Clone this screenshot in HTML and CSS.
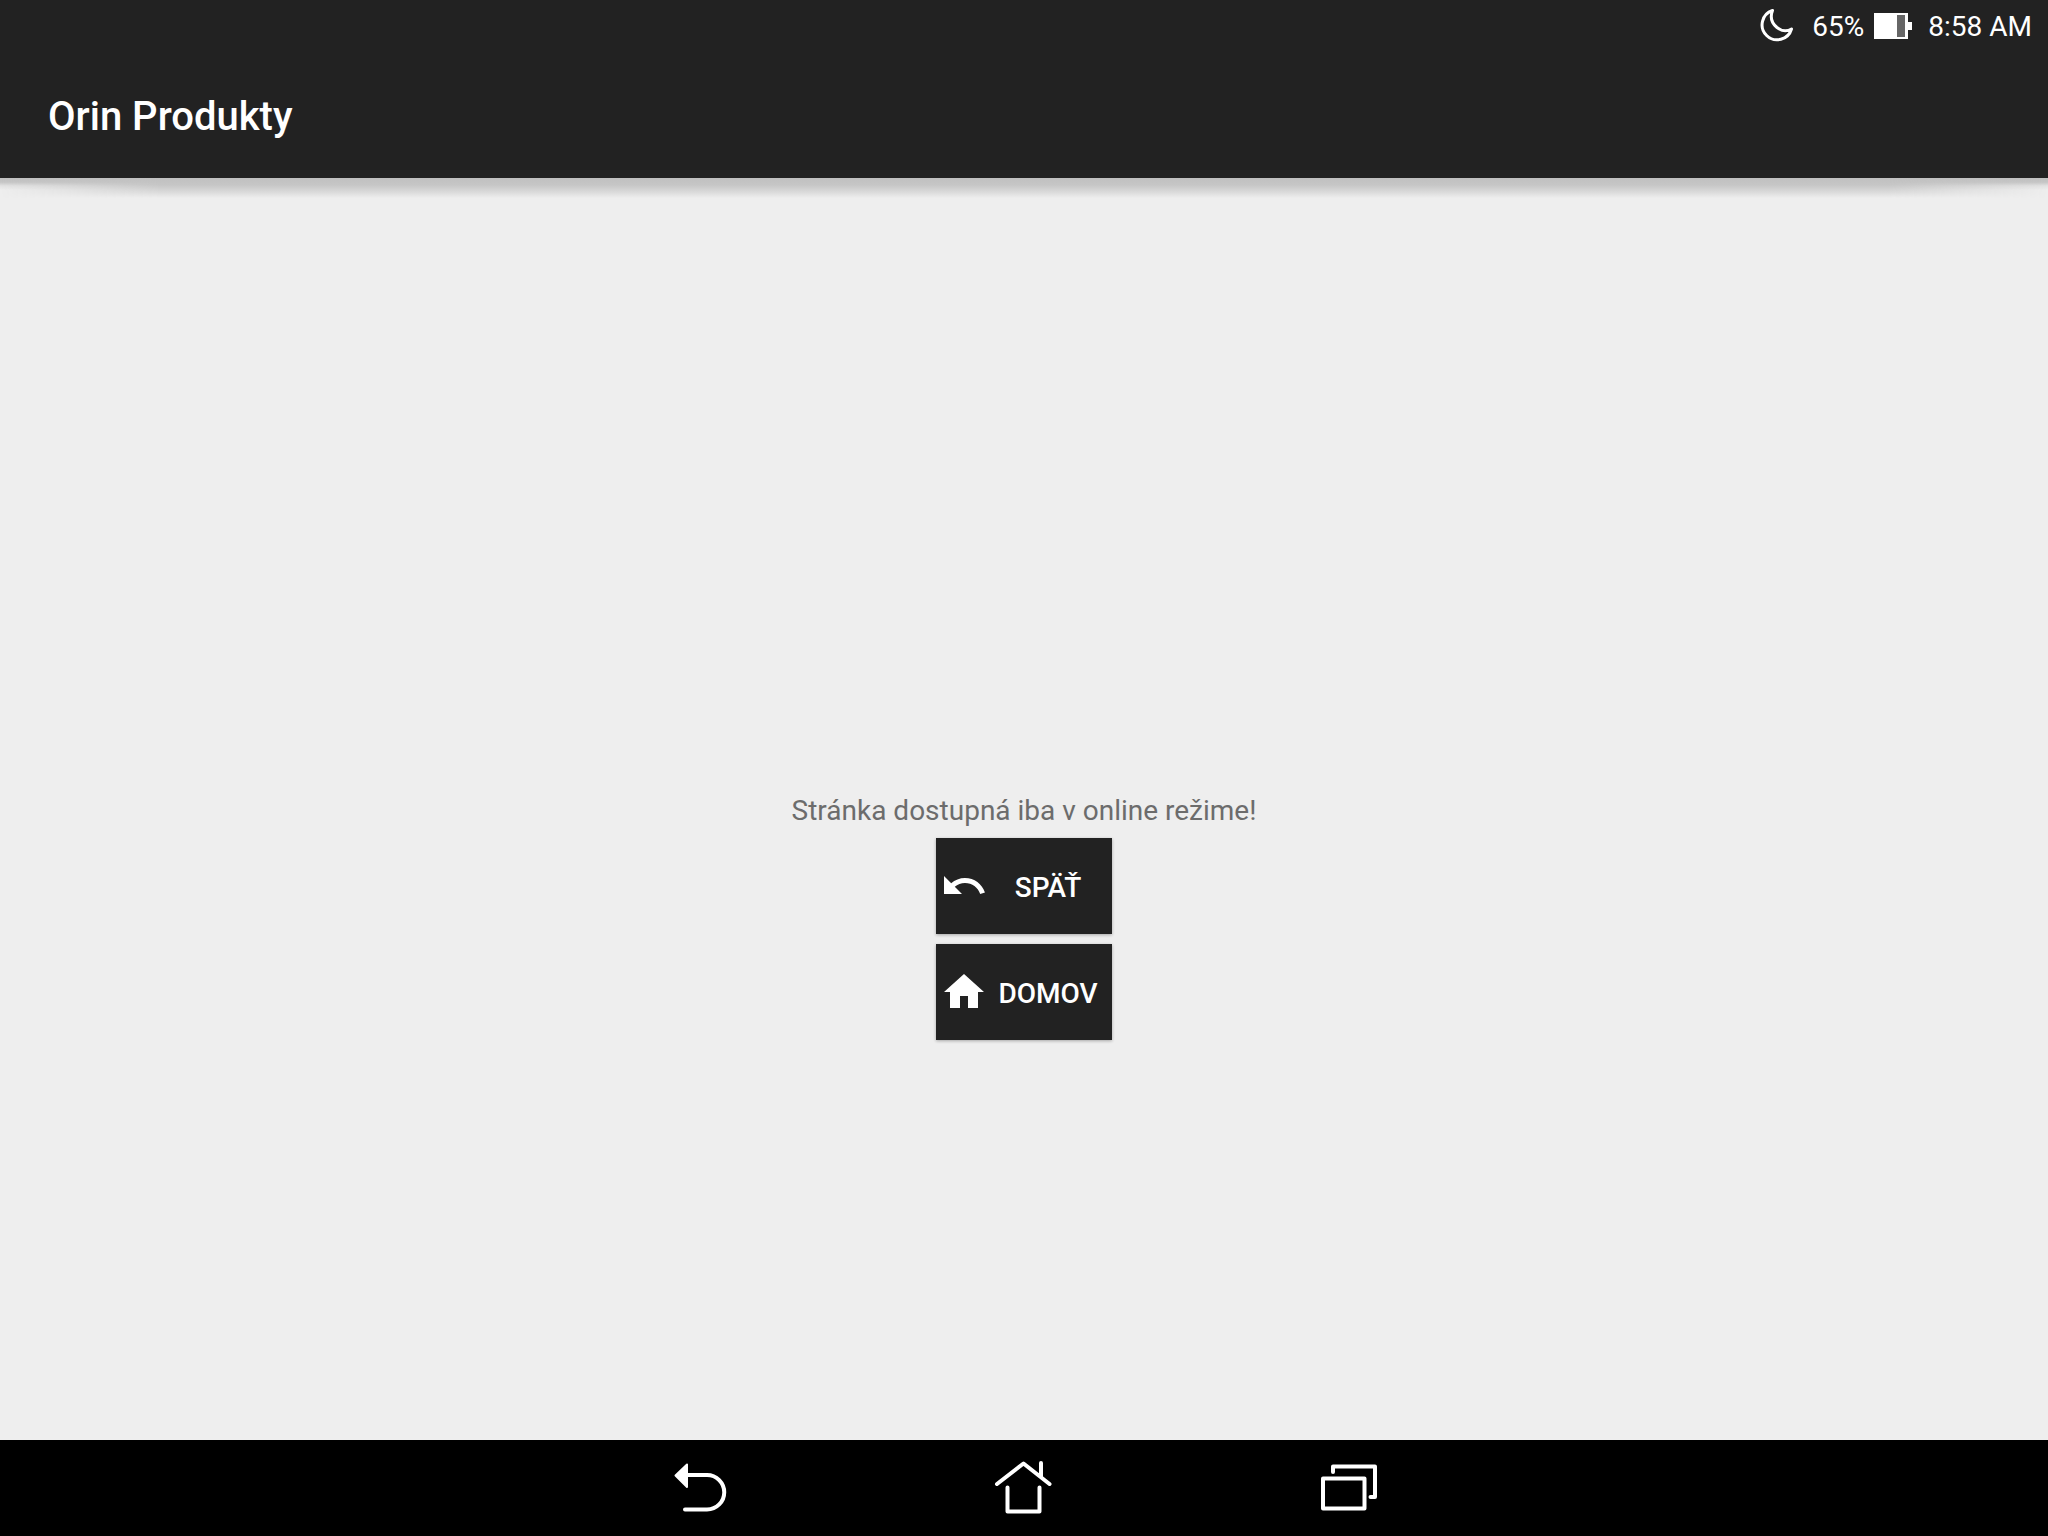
FILE: index.html
```html
<!DOCTYPE html>
<html lang="sk">
<head>
<meta charset="utf-8">
<meta name="viewport" content="width=device-width, initial-scale=1">
<title>Orin Produkty</title>
<link rel="stylesheet" href="styles.css">
</head>
<body>
<header class="top">
  <div class="status">
    <svg class="moon" viewBox="0 0 36 36" aria-hidden="true"><path d="M13.500 2.500A15 15 0 1 0 32.500 21C28 23.500 22.500 23 18 19.500C12.500 15 11 9 13.500 2.500Z"/></svg>
    <span class="battery-level">65%</span>
    <svg class="battery" viewBox="0 0 38 26" aria-hidden="true"><path fill="#fff" d="M0 0h34v9h4v8h-4v9H0z"/><path fill="#666" d="M23 2h8v22h-8z"/></svg>
    <time class="clock">8:58 AM</time>
  </div>
  <div class="appbar"><h1 class="title">Orin Produkty</h1></div>
</header>
<main class="content">
  <p class="message">Stránka dostupná iba v online režime!</p>
  <div class="actions">
    <button class="action" type="button">
      <svg class="action-icon" viewBox="0 0 24 24" aria-hidden="true"><path d="M12.500 8c-2.650 0-5.050.99-6.900 2.600L2 7v9h9l-3.620-3.620c1.390-1.160 3.160-1.880 5.120-1.880 3.540 0 6.550 2.310 7.600 5.500l2.370-.78C21.080 11.030 17.150 8 12.500 8z"/></svg>
      <span class="action-label">SPÄŤ</span>
    </button>
    <button class="action" type="button">
      <svg class="action-icon" viewBox="0 0 24 24" aria-hidden="true"><path d="M10 20v-6h4v6h5v-8h3L12 3 2 12h3v8z"/></svg>
      <span class="action-label">DOMOV</span>
    </button>
  </div>
</main>
<nav class="navbar" aria-label="System">
  <button class="nav-button" type="button" aria-label="Back">
    <svg class="nav-icon" viewBox="0 0 64 64" aria-hidden="true"><path d="M19 19H39A17.250 17.250 0 0 1 39 53.500H17"/><path fill="#fff" stroke-width="2" d="M7.500 19.500L19 8.500V31Z"/></svg>
  </button>
  <button class="nav-button" type="button" aria-label="Home">
    <svg class="nav-icon" viewBox="0 0 64 64" aria-hidden="true"><path d="M5 28L31.500 7.500L57.500 28M49 7V21M15.500 31.500V55.500H47.500V31.500"/></svg>
  </button>
  <button class="nav-button" type="button" aria-label="Recent apps">
    <svg class="nav-icon" viewBox="0 0 64 64" aria-hidden="true"><path d="M7 22.500H48.500V52.500H7ZM17 16V10.500H59V41H54.500"/></svg>
  </button>
</nav>
</body>
</html>
```
FILE: styles.css
```css
* { box-sizing: border-box; }

body {
  margin: 0;
  min-height: 100vh;
  display: flex;
  flex-direction: column;
  background: #eee;
  color: #fff;
  font-family: Roboto, "Noto Sans", sans-serif;
  font-size: 28px;
}

.top {
  position: relative;
  background: #222;
}

/* Drop shadow below the bar; the deeper layer fades towards both edges. */
.top::before,
.top::after {
  content: "";
  position: absolute;
  top: 100%;
  left: 0;
  right: 0;
  pointer-events: none;
}

.top::before {
  height: 12px;
  background: linear-gradient(#c0c0c0, #c6c6c6 35%, #e2e2e2 65%, #eee);
}

.top::after {
  height: 20px;
  background: linear-gradient(#c0c0c0, #c6c6c6 35%, #dadada 70%, #eee);
  mask-image: linear-gradient(90deg, transparent, #000 160px, #000 calc(100% - 160px), transparent);
}

.status {
  display: flex;
  align-items: center;
  justify-content: flex-end;
  height: 50px;
  padding: 2px 16px 0 0;
}

.moon {
  width: 36px;
  height: 36px;
  margin-right: 17px;
  fill: none;
  stroke: #fff;
  stroke-width: 3;
  stroke-linejoin: round;
}

.battery {
  width: 38px;
  height: 26px;
  margin: 0 16px 0 10px;
}

.appbar {
  display: flex;
  align-items: center;
  height: 128px;
  padding: 4px 48px 0;
}

.title {
  margin: 0;
  font-size: 40px;
  font-weight: 500;
}

/* The message sits in the middle; the buttons hang below it. */
.content {
  flex: 1;
  display: grid;
  grid-template-rows: 1fr auto 1fr;
  justify-items: center;
}

.message {
  grid-row: 2;
  margin: 0;
  padding-top: 4px;
  line-height: 38px;
  color: #6c6c6c;
}

.actions {
  grid-row: 3;
  display: flex;
  flex-direction: column;
  gap: 10px;
  padding: 8px 0;
}

.action {
  display: flex;
  align-items: center;
  min-width: 176px;
  height: 96px;
  padding: 0 4px;
  border: 0;
  background: #222;
  color: #fff;
  font: inherit;
  font-weight: 500;
  box-shadow: 0 1px 3px rgba(0, 0, 0, 0.3);
}

.action-icon {
  width: 48px;
  height: 48px;
  fill: #fff;
}

.action-label {
  flex: 1;
  padding-top: 2px;
  text-align: center;
}

.navbar {
  display: flex;
  justify-content: center;
  height: 96px;
  background: #000;
}

.nav-button {
  display: flex;
  align-items: center;
  justify-content: center;
  width: 324px;
  padding: 0;
  border: 0;
  background: none;
}

.nav-icon {
  width: 64px;
  height: 64px;
  fill: none;
  stroke: #fff;
  stroke-width: 4;
  stroke-linecap: round;
  stroke-linejoin: round;
}
```
